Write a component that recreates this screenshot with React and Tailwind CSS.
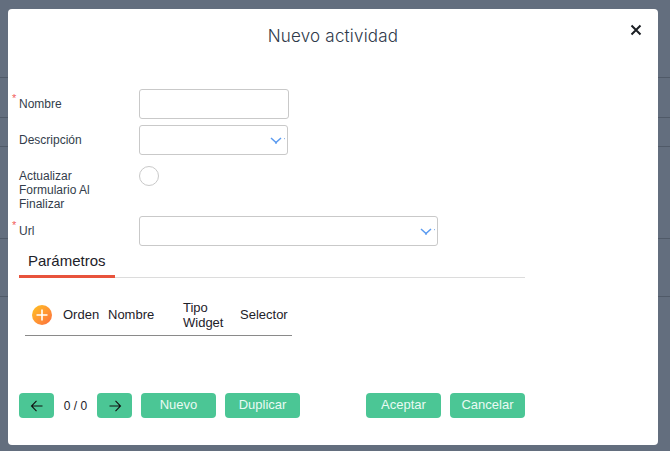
import React from 'react';

function Chevron() {
  return (
    <span className="absolute right-0 top-0 h-full w-[20px]">
      <svg width="20" height="28" viewBox="0 0 20 28" fill="none">
        <path d="M4 12 L9 16.5 L14 12" stroke="#5b9bf0" strokeWidth="1.5" />
        <path d="M9 15.5 V18" stroke="#5b9bf0" strokeWidth="1.2" />
        <path d="M17.5 12 V13.2" stroke="#8fb8ee" strokeWidth="1" />
      </svg>
    </span>
  );
}

function Label({ required, children }) {
  return (
    <div className="w-[120px] shrink-0">
      <label className="relative block w-[100px] text-[12px] leading-[14px] text-[#333d4b]">
        {required && (
          <span className="absolute left-[-7px] top-[-4px] text-[11px] leading-[11px] text-[#f25c5c]">*</span>
        )}
        {children}
      </label>
    </div>
  );
}

function SelectBox({ width }) {
  return (
    <div className={`relative h-[30px] rounded-[3px] border border-[#c9c9c9] bg-white ${width}`}>
      <Chevron />
    </div>
  );
}

function Button({ children, className = 'w-[75px]' }) {
  return (
    <button className={`h-[25px] rounded-[4px] bg-[#4bc695] pb-[2px] text-[13px] text-[#e9faf3] ${className}`}>
      {children}
    </button>
  );
}

function Arrow({ right }) {
  return (
    <svg width="14" height="14" viewBox="0 0 14 14" fill="none" stroke="#111" strokeWidth="1.1">
      {right ? <path d="M1.5 7 H12.5 M7.5 1.8 L12.5 7 L7.5 12.2" /> : <path d="M12.5 7 H1.5 M6.5 1.8 L1.5 7 L6.5 12.2" />}
    </svg>
  );
}

export default function App() {
  return (
    <div className="relative h-[451px] w-[670px] overflow-hidden bg-[#636e7e]" style={{ fontFamily: '"Liberation Sans", Arial, sans-serif' }}>
      {/* rows of the page behind the modal */}
      <div className="h-[78px] border-b border-[#505a68]" />
      <div className="h-[40px] border-b border-[#505a68]" />
      <div className="h-[29px] border-b border-[#505a68]" />
      <div className="h-[92px] border-b border-[#505a68]" />
      <div className="h-[58px] border-b border-[#505a68]" />

      <div className="absolute left-[8px] top-[9px] h-[436px] w-[650px] rounded-[4px] bg-white">
        <div className="relative h-[80px] pt-[16px] text-center text-[17px] leading-[22px] text-[#2f3a4a]" style={{ fontFamily: 'Inter, sans-serif' }}>
          <span className="font-light tracking-[0.2px]">Nuevo actividad</span>
          <button className="absolute left-[622px] top-[15px]">
            <svg width="12" height="12" viewBox="0 0 12 12" stroke="#1b1f24" strokeWidth="2" className="block">
              <path d="M1.5 1.5 L10.5 10.5 M10.5 1.5 L1.5 10.5" />
            </svg>
          </button>
        </div>

        <div className="w-[517px] pl-[11px]">
          <div className="flex items-center">
            <Label required>Nombre</Label>
            <div className="h-[30px] w-[150px] rounded-[3px] border border-[#c9c9c9]" />
          </div>
          <div className="mt-[6px] flex items-center">
            <Label>Descripción</Label>
            <SelectBox width="w-[149px]" />
          </div>
          <div className="mt-[11px] flex items-start">
            <div className="pt-[3px]">
              <Label>Actualizar Formulario Al Finalizar</Label>
            </div>
            <div className="h-[20px] w-[20px] rounded-full border border-[#c9c9c9]" />
          </div>
          <div className="mt-[5px] flex items-center">
            <Label required>Url</Label>
            <SelectBox width="w-[299px]" />
          </div>

          <div className="mt-[1px] h-[31px] border-b border-[#dcdcdc]">
            <div className="h-[31px] w-[96px] border-b-[3px] border-[#e8533c] pl-[9px] pt-[4px] text-[15px] leading-[20px] text-[#1d2129]">
              Parámetros
            </div>
          </div>

          <div className="ml-[6px] mt-[19px] flex h-[39px] w-[267px] items-center border-b border-[#8a8a8a] pb-[3px] text-[13px] leading-[15px] text-[#1d2129]">
            <div className="ml-[7px] flex h-[20px] w-[20px] items-center justify-center rounded-full bg-gradient-to-br from-[#ffc21c] to-[#fb6a3c]">
              <svg width="12" height="12" viewBox="0 0 12 12" stroke="#fff" strokeWidth="1.6">
                <path d="M6 .5 V11.5 M.5 6 H11.5" />
              </svg>
            </div>
            <span className="ml-[11px] w-[45px]">Orden</span>
            <span className="w-[75px]">Nombre</span>
            <span className="w-[57px]">Tipo Widget</span>
            <span>Selector</span>
          </div>

          <div className="mt-[57px] flex items-center">
            <Button className="flex w-[35px] items-center justify-center !pb-0"><Arrow /></Button>
            <span className="w-[43px] text-center text-[12px] text-[#1d2129]">0 / 0</span>
            <Button className="flex w-[35px] items-center justify-center !pb-0"><Arrow right /></Button>
            <div className="ml-[9px] flex gap-[9px]">
              <Button>Nuevo</Button>
              <Button>Duplicar</Button>
            </div>
            <div className="ml-auto flex gap-[9px]">
              <Button>Aceptar</Button>
              <Button>Cancelar</Button>
            </div>
          </div>
        </div>
      </div>
    </div>
  );
}
